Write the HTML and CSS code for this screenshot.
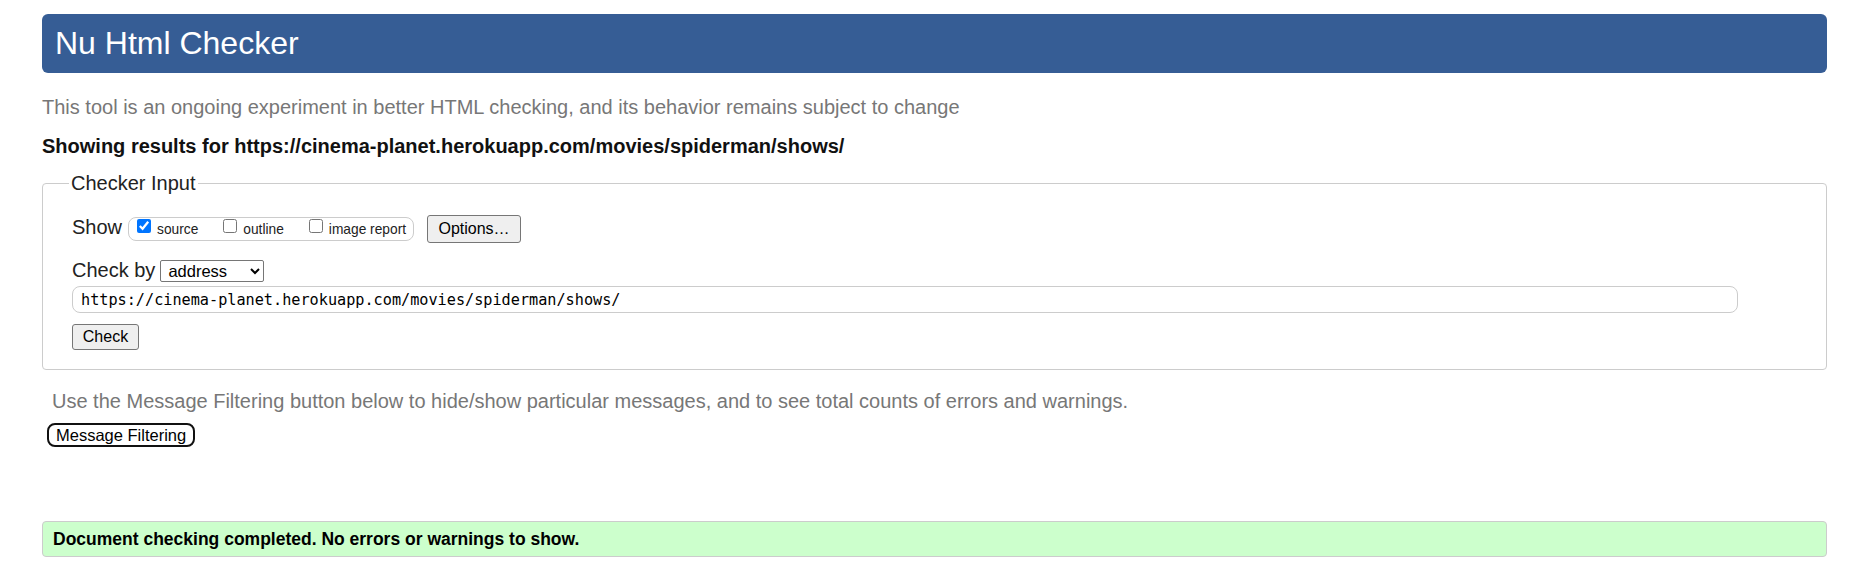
FILE: index.html
```html
<!DOCTYPE html>
<html lang="en">
<head>
<meta charset="utf-8">
<title>Nu Html Checker</title>
<link rel="stylesheet" href="styles.css">
</head>
<body>
<h1 class="title">Nu Html Checker</h1>
<p class="intro">This tool is an ongoing experiment in better HTML checking, and its behavior remains subject to change</p>
<p class="showing">Showing results for https://cinema-planet.herokuapp.com/movies/spiderman/shows/</p>
<form class="checker">
  <fieldset class="checker-box">
    <legend class="checker-legend">Checker Input</legend>
    <div class="row row-show">
      <span class="row-label">Show</span>
      <span class="opts">
        <label class="opt"><input type="checkbox" class="cb" checked><span class="opt-text">source</span></label>
        <label class="opt"><input type="checkbox" class="cb"><span class="opt-text">outline</span></label>
        <label class="opt opt-last"><input type="checkbox" class="cb"><span class="opt-text">image report</span></label>
      </span>
      <button type="button" class="btn btn-options">Options…</button>
    </div>
    <div class="row row-by">
      <span class="row-label">Check by</span>
      <select class="sel"><option>address</option></select>
    </div>
    <input type="text" class="url" value="https://cinema-planet.herokuapp.com/movies/spiderman/shows/">
    <div class="row-check">
      <button type="button" class="btn btn-check">Check</button>
    </div>
  </fieldset>
</form>
<p class="filter-note">Use the Message Filtering button below to hide/show particular messages, and to see total counts of errors and warnings.</p>
<div class="filter-row"><button type="button" class="filter-btn">Message Filtering</button></div>
<p class="success">Document checking completed. No errors or warnings to show.</p>
</body>
</html>
```
FILE: styles.css
```css
html, body {
  background: #fff;
}
body {
  margin: 0;
  padding: 14px 28px 0 42px;
  font-family: "Liberation Sans", Arial, sans-serif;
  color: #000;
}
.title {
  margin: 0;
  height: 59px;
  box-sizing: border-box;
  padding: 0 13px;
  display: flex;
  align-items: center;
  background: #365d95;
  border-radius: 6px;
  color: #fff;
  font-size: 32px;
  font-weight: normal;
}
.intro {
  margin: 23px 0 0;
  font-size: 20px;
  line-height: 23px;
  color: #777;
}
.showing {
  margin: 16px 0 0;
  font-size: 20px;
  line-height: 23px;
  font-weight: bold;
  color: #111;
}
.checker {
  margin: 14px 0 0;
}
.checker-box {
  margin: 0;
  padding: 20px 29px 19px 29px;
  border: 1px solid #ccc;
  border-radius: 4px;
  min-width: 0;
}
.checker-legend {
  padding: 0 2px;
  margin-left: -3px;
  font-size: 20px;
  line-height: 23px;
  color: #222;
}
.row {
  display: flex;
  align-items: center;
}
.row-show {
  height: 28px;
}
.row-label {
  font-size: 20px;
  line-height: 23px;
  color: #222;
  margin-right: 6px;
}
.row-show .row-label {
  margin-bottom: 3px;
  margin-right: 6px;
}
.opts {
  display: flex;
  align-items: flex-start;
  box-sizing: border-box;
  height: 24px;
  border: 1px solid #ccc;
  border-radius: 8px;
  padding: 0 7px 0 8px;
}
.opt {
  display: flex;
  align-items: flex-start;
  margin-right: 25px;
}
.opt-last {
  margin-right: 0;
}
.cb {
  width: 14px;
  height: 14px;
  margin: 1px 6px 0 0;
}
.opt-text {
  font-size: 13.75px;
  line-height: 16px;
  margin-top: 4px;
  color: #222;
}
.btn {
  font-family: "Liberation Sans", Arial, sans-serif;
  font-size: 16px;
  color: #000;
  background: #efefef;
  border: 1px solid #767676;
  border-radius: 3px;
  box-sizing: border-box;
  padding: 0;
  margin: 0;
}
.btn-options {
  width: 94px;
  height: 28px;
  margin-left: 13px;
}
.row-by {
  margin-top: 16px;
  height: 23px;
}
.row-by .row-label {
  margin-right: 5px;
}
.sel {
  width: 104px;
  height: 22px;
  box-sizing: border-box;
  font-family: "Liberation Sans", Arial, sans-serif;
  font-size: 16.5px;
  color: #000;
  background: #fff;
  border: 1px solid #767676;
  border-radius: 2px;
  padding: 0 0 0 3px;
  margin: 0;
}
.url {
  display: block;
  margin: 4px 0 0;
  width: 1666px;
  height: 27px;
  box-sizing: border-box;
  border: 1px solid #ccc;
  border-radius: 8px;
  padding: 0 8px;
  font-family: "DejaVu Sans Mono", "Liberation Mono", monospace;
  font-size: 15.2px;
  color: #000;
  background: #fff;
}
.row-check {
  margin-top: 11px;
}
.btn-check {
  width: 67px;
  height: 26px;
}
.filter-note {
  margin: 20px 0 0;
  padding-left: 10px;
  font-size: 20px;
  line-height: 23px;
  color: #777;
}
.filter-row {
  margin-top: 10px;
  padding-left: 5px;
}
.filter-btn {
  height: 24px;
  box-sizing: border-box;
  padding: 0 7px;
  margin: 0;
  background: #fff;
  border: 2px solid #111;
  border-radius: 8px;
  font-family: "Liberation Sans", Arial, sans-serif;
  font-size: 16.5px;
  color: #000;
}
.success {
  margin: 74px 0 0;
  height: 36px;
  box-sizing: border-box;
  display: flex;
  align-items: center;
  padding: 0 10px;
  background: #ccffcc;
  border: 1px solid #ccc;
  border-radius: 4px;
  font-size: 17.5px;
  line-height: 20px;
  font-weight: bold;
  color: #000;
}
```
